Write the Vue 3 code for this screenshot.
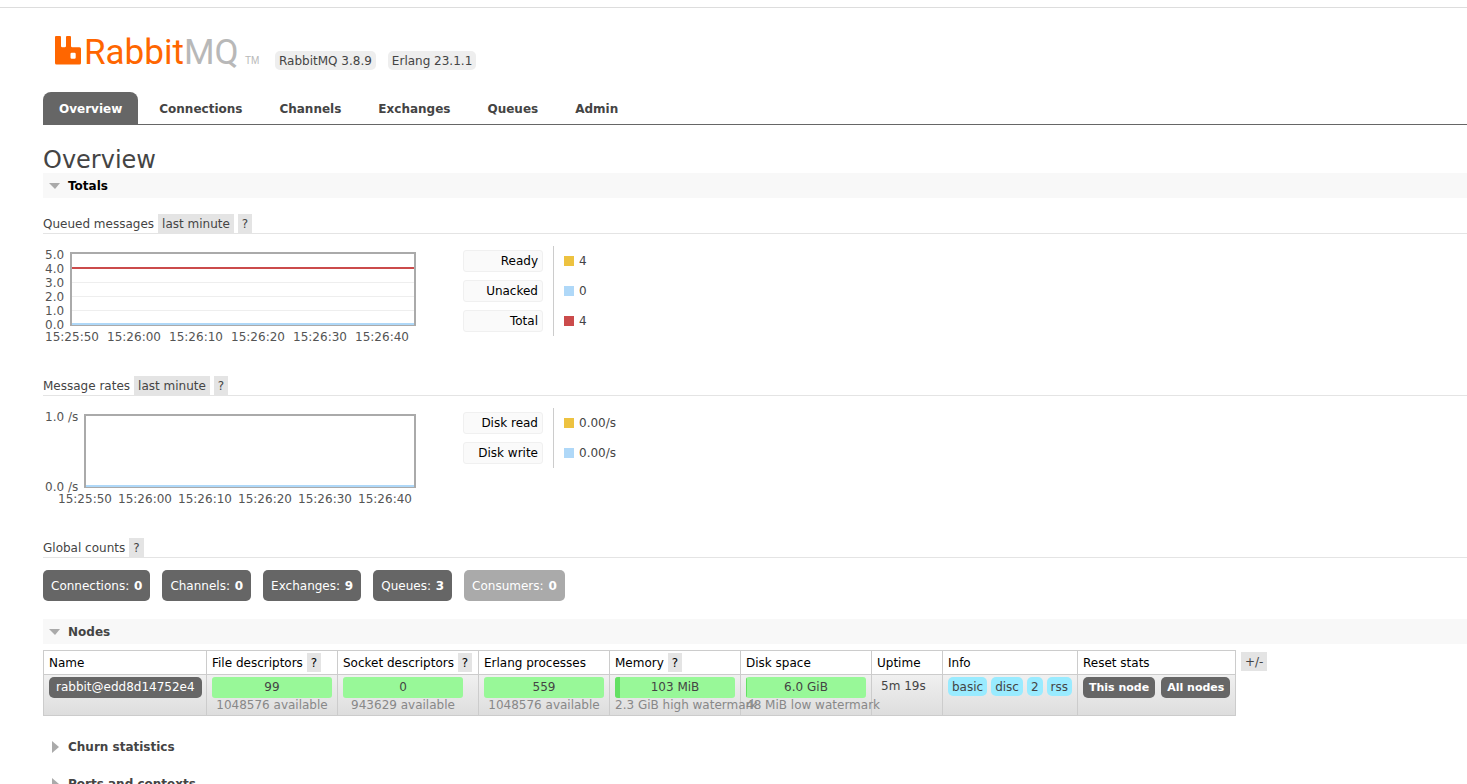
<!-- Management overview page -->
<template>
  <div class="topline"></div>
  <header class="header">
    <a href="#/" class="logo" aria-label="RabbitMQ">
      <svg width="210" height="38" viewBox="0 0 210 38">
        <path
          class="mark"
          d="M3 4h4q1 0 1 1v9q0 1.3 1.3 1.3h2.4q1.3 0 1.3-1.3V5q0-1 1-1h3q1 0 1 1v9q0 1.3 1.3 1.3h7.2q1.5 0 1.5 1.5v14.2q0 1.5-1.5 1.5H3.5q-1.5 0-1.5-1.5V5q0-1 1-1zM17.5 22v3.5q0 1.2 1.2 1.2h2.8q1.2 0 1.2-1.2v-3.5q0-1.2-1.2-1.2h-2.8q-1.2 0-1.2 1.2z"
        />
        <text class="word" x="31" y="32">Rabbit<tspan class="mq">MQ</tspan></text>
        <text class="tm" x="192" y="32">TM</text>
      </svg>
    </a>
    <span v-for="v in versions" :key="v" class="version">{{ v }}</span>
  </header>

  <nav class="tabs">
    <a v-for="tab in tabs" :key="tab" href="#/" :class="{ selected: tab === current }" @click.prevent="current = tab">{{ tab }}</a>
  </nav>

  <main class="main">
    <h1>Overview</h1>

    <section>
      <h2 class="open hot"><button type="button">Totals</button></h2>

      <template v-for="chart in charts" :key="chart.title">
        <h3>
          <span>{{ chart.title }}</span>
          <button type="button" class="tag">last minute</button>
          <button type="button" class="tag">?</button>
        </h3>
        <div class="chart-row">
          <svg class="chart" width="376" height="100" viewBox="0 0 376 100">
            <path v-for="y in chart.grid" :key="y" class="grid" :d="`M${chart.left} ${y}.5H371`" />
            <rect class="frame" :x="chart.left" y="7" :width="372 - chart.left" height="72" />
            <path v-if="chart.total" class="total" :d="`M${chart.left + 1} ${chart.total}H371`" />
            <path class="zero" :d="`M${chart.left + 1} 78H371`" />
            <text v-for="l in chart.yLabels" :key="l.text" x="2" :y="l.y">{{ l.text }}</text>
            <text v-for="(t, i) in times" :key="t" class="time" :x="chart.firstTime + i * chart.timeStep" y="95">{{ t }}</text>
          </svg>
          <table class="legend">
            <tbody>
              <tr v-for="item in chart.legend" :key="item.label">
                <th><button type="button">{{ item.label }}</button></th>
                <td><i :class="item.color"></i>{{ item.value }}</td>
              </tr>
            </tbody>
          </table>
        </div>
      </template>

      <h3><span>Global counts</span> <button type="button" class="tag">?</button></h3>
      <div class="counts">
        <a v-for="c in counts" :key="c.label" href="#/" :class="{ disabled: c.disabled }">{{ c.label }}: <b>{{ c.value }}</b></a>
      </div>
    </section>

    <section>
      <h2 class="open"><button type="button">Nodes</button></h2>
      <div class="nodes-row">
        <table class="nodes">
          <colgroup>
            <col class="c-name" />
            <col class="c-bar" />
            <col class="c-socket" />
            <col class="c-bar" />
            <col class="c-bar" />
            <col class="c-bar" />
            <col class="c-uptime" />
            <col class="c-info" />
            <col class="c-reset" />
          </colgroup>
          <thead>
            <tr>
              <th>Name</th>
              <th v-for="s in stats" :key="s.title">
                {{ s.title }} <button v-if="s.help" type="button" class="tag">?</button>
              </th>
              <th>Uptime</th>
              <th>Info</th>
              <th>Reset stats</th>
            </tr>
          </thead>
          <tbody>
            <tr>
              <td><a href="#/" class="pill">rabbit@edd8d14752e4</a></td>
              <td v-for="s in stats" :key="s.title">
                <div class="bar">
                  <div class="fill" :style="{ width: s.used + 'px' }"></div>
                  <span>{{ s.value }}</span>
                </div>
                <div class="sub" :class="{ wide: s.wide }">{{ s.note }}</div>
              </td>
              <td class="uptime">5m 19s</td>
              <td>
                <div class="group infos"><abbr v-for="i in infos" :key="i">{{ i }}</abbr></div>
              </td>
              <td>
                <div class="group">
                  <button type="button" class="pill strong">This node</button>
                  <button type="button" class="pill strong">All nodes</button>
                </div>
              </td>
            </tr>
          </tbody>
        </table>
        <button type="button" class="tag columns">+/-</button>
      </div>
    </section>

    <h2 v-for="s in closedSections" :key="s" class="closed"><button type="button">{{ s }}</button></h2>
  </main>
</template>

<script setup>
import { ref } from "vue";

const current = ref("Overview");
const versions = ["RabbitMQ 3.8.9", "Erlang 23.1.1"];
const tabs = ["Overview", "Connections", "Channels", "Exchanges", "Queues", "Admin"];
const times = ["15:25:50", "15:26:00", "15:26:10", "15:26:20", "15:26:30", "15:26:40"];
const infos = ["basic", "disc", "2", "rss"];
const closedSections = ["Churn statistics", "Ports and contexts"];

const charts = [
  {
    title: "Queued messages",
    left: 28,
    grid: [36, 50, 64],
    total: 22,
    yLabels: ["5.0", "4.0", "3.0", "2.0", "1.0", "0.0"].map((text, i) => ({ text, y: 13 + i * 14 })),
    firstTime: 29,
    timeStep: 62,
    legend: [
      { label: "Ready", value: "4", color: "yellow" },
      { label: "Unacked", value: "0", color: "blue" },
      { label: "Total", value: "4", color: "red" },
    ],
  },
  {
    title: "Message rates",
    left: 42,
    grid: [],
    yLabels: [
      { text: "1.0 /s", y: 13 },
      { text: "0.0 /s", y: 83 },
    ],
    firstTime: 42,
    timeStep: 60,
    legend: [
      { label: "Disk read", value: "0.00/s", color: "yellow" },
      { label: "Disk write", value: "0.00/s", color: "blue" },
    ],
  },
];

const counts = [
  { label: "Connections", value: 0 },
  { label: "Channels", value: 0 },
  { label: "Exchanges", value: 9 },
  { label: "Queues", value: 3 },
  { label: "Consumers", value: 0, disabled: true },
];

const stats = [
  { title: "File descriptors", help: true, value: "99", note: "1048576 available", used: 0 },
  { title: "Socket descriptors", help: true, value: "0", note: "943629 available", used: 0 },
  { title: "Erlang processes", value: "559", note: "1048576 available", used: 0 },
  { title: "Memory", help: true, value: "103 MiB", note: "2.3 GiB high watermark", used: 5, wide: true },
  { title: "Disk space", value: "6.0 GiB", note: "48 MiB low watermark", used: 1, wide: true },
];
</script>

<style>
html { scrollbar-width: none; }
body { background: #fff; color: #444; font: 12px/15px Verdana, "DejaVu Sans", sans-serif; }
</style>

<style scoped>
a { color: inherit; text-decoration: none; }
button { font: inherit; color: inherit; background: none; border: 0; margin: 0; padding: 0; cursor: pointer; }

.topline { height: 7px; border-bottom: 1px solid #ddd; }
.header { display: flex; align-items: flex-end; gap: 12px; padding: 24px 0 0 53px; height: 38px; }
.logo svg { display: block; }
.mark, .word { fill: #f60; }
.mark { fill-rule: evenodd; }
.word { font: 35px Roboto, "Liberation Sans", sans-serif; }
.mq, .tm { fill: #b8b8b8; }
.tm { font: 10px "Liberation Sans", Arial, sans-serif; }
.version { background: #eee; border-radius: 5px; padding: 3px 4px 1px; }

.tabs { display: flex; gap: 5px; margin: 22px 0 0 43px; border-bottom: 1px solid #666; }
.tabs a { padding: 10px 16px 7px; font-weight: bold; border-radius: 8px 8px 0 0; }
.tabs .selected { background: #666; color: #fff; }

.main { margin-left: 43px; padding-top: 22px; }
h1 { font-size: 24px; line-height: 26px; font-weight: normal; margin: 0; }
h2 { font-size: 12px; margin: 0; }
h2 button { display: flex; align-items: center; width: 100%; padding: 6px 7px 4px; font-weight: bold; }
h2 button::before { content: ""; box-sizing: border-box; width: 11px; margin: 0 8px 2px 0; }
.open { background: #f8f8f8; }
.open button { padding-left: 6px; }
.open button::before { border: solid transparent; border-width: 6px 5px 0 6px; border-top-color: #aaa; }
.closed button::before { height: 12px; border: solid transparent; border-width: 6px 0 6px 7px; border-left-color: #aaa; width: 7px; margin: 0 9px 2px 2px; }
.hot { color: #000; }
.closed { margin-bottom: 12px; }

h3 { display: flex; align-items: center; gap: 4px; margin: 16px 0 0; font-size: 12px; font-weight: normal; border-bottom: 1px solid #e4e4e4; }
h3 span { padding: 3px 0 1px; }
.tag { background: #e4e4e4; padding: 3px 4px 1px; }

.chart-row { display: flex; align-items: flex-start; gap: 44px; padding-top: 12px; height: 114px; }
.chart { display: block; }
.chart text { font-size: 12px; fill: #545454; }
.chart .time { text-anchor: middle; }
.frame { fill: none; stroke: #aaa; stroke-width: 2; }
.grid { stroke: #eee; }
.total { stroke: #cb4b4b; stroke-width: 2; }
.zero { stroke: #afd8f8; stroke-width: 2; }

.legend { border-collapse: collapse; }
.legend tr { height: 30px; }
.legend th { padding: 0 10px 0 0; border-right: 1px solid #ccc; font-weight: normal; }
.legend button { display: block; width: 80px; padding: 3px 4px 2px; border: 1px solid #f0f0f0; border-radius: 3px; background: #fafafa; color: #000; line-height: 15px; text-align: right; }
.legend td { padding: 0 10px; }
.legend i { display: inline-block; width: 10px; height: 10px; margin-right: 5px; vertical-align: -1px; }
.yellow { background: #edc240; }
.blue { background: #afd8f8; }
.red { background: #cb4b4b; }

.counts { display: flex; gap: 12px; padding: 12px 0 18px; }
.counts a { padding: 9px 8px 7px; border-radius: 5px; background: #666; color: #fff; }
.counts b { margin-left: 1px; }
.counts .disabled { background: #aaa; }

.nodes-row { display: flex; align-items: flex-start; gap: 5px; padding: 6px 0 18px; }
.nodes { table-layout: fixed; width: 1193px; border-collapse: collapse; flex: none; }
.nodes th, .nodes td { border: 1px solid #ccc; text-align: left; white-space: nowrap; }
.nodes th { height: 21px; padding: 2px 5px 0; color: #000; font-weight: normal; vertical-align: baseline; }
.nodes td { height: 36px; padding: 2px 5px; vertical-align: top; }
.nodes tbody tr { background: linear-gradient(#f0f0f0, #ddd); }
.c-name { width: 163px; }
.c-bar { width: 131px; }
.c-socket { width: 141px; }
.c-uptime { width: 71px; }
.c-info { width: 135px; }
.c-reset { width: 158px; }
.pill { display: inline-block; padding: 3px 7px; border-radius: 5px; background: #666; color: #fff; }
.nodes .strong { padding: 3px 6px; font-size: 11px; font-weight: bold; }
.bar { position: relative; width: 120px; padding: 3px 0; border-radius: 3px; overflow: hidden; background: #98f898; text-align: center; }
.fill { position: absolute; left: 0; top: 0; bottom: 0; background: #64e064; }
.bar span { position: relative; }
.sub { width: 120px; color: #888; text-align: center; }
.wide { text-align: left; }
.nodes .uptime { padding: 4px 9px 0; }
.group { display: flex; gap: 6px; }
.infos { gap: 4px; }
.infos abbr { padding: 3px 4px 1px; border-radius: 5px; background: #99ebff; }
.columns { margin-top: 2px; }
</style>
